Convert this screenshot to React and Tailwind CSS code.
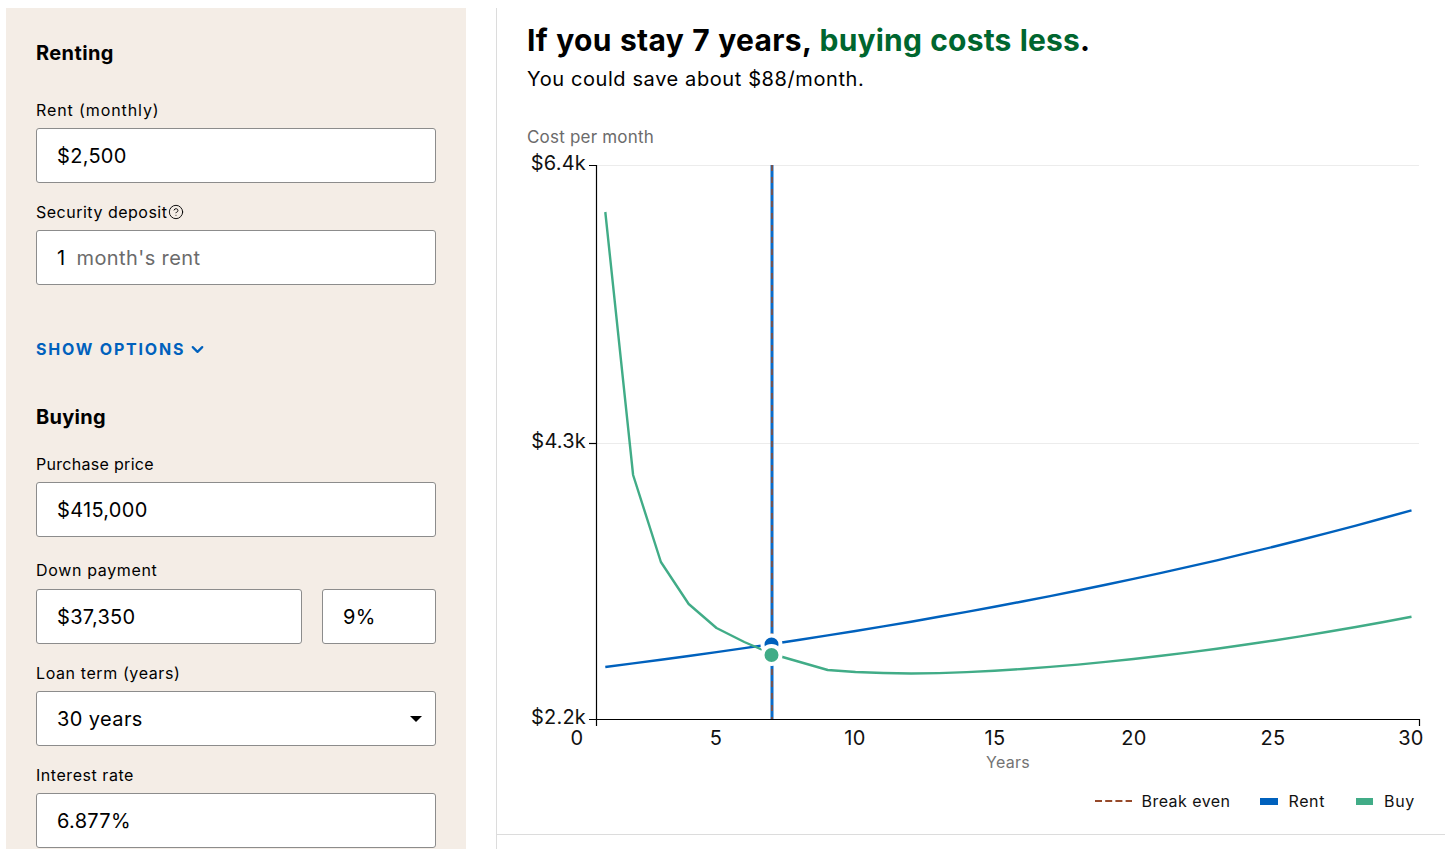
import { ChevronDown, CircleHelp } from 'lucide-react';

const BLUE = '#0061bd';
const GREEN = '#41ac87';
const BROWN = '#96492a';

const xAt = (t) => 577.5 + 27.8 * t;
const years = Array.from({ length: 30 }, (_, i) => i + 1);

// rent grows about 2.8% a year
const rentY = (t) => 667 - 124.2 * (Math.pow(1.028, t) - 1.028);
const rentLine = years.map((t) => `${xAt(t)},${rentY(t).toFixed(1)}`).join(' ');

const buyStart = [212, 475, 562, 604, 628, 642, 654, 662, 670, 672, 673, 673.5];
const buyY = (t) => (t <= 12 ? buyStart[t - 1] : 673.5 - 0.441 * Math.pow(t - 12, 1.68));
const buyLine = years.map((t) => `${xAt(t)},${buyY(t).toFixed(1)}`).join(' ');

const yTicks = [
  { y: 165, label: '$6.4k' },
  { y: 443, label: '$4.3k' },
  { y: 719, label: '$2.2k' },
];
const xTicks = [
  { x: 577, label: '0' },
  { x: 716, label: '5' },
  { x: 855, label: '10' },
  { x: 995, label: '15' },
  { x: 1134, label: '20' },
  { x: 1273, label: '25' },
  { x: 1411, label: '30' },
];

function TextInput({ value, className = 'w-[400px]' }) {
  return (
    <input
      readOnly
      value={value}
      className={`${className} block h-[55px] rounded-[3px] border border-[#8c8c8c] bg-white pl-5 text-[20px] tracking-[0.3px] text-black outline-none`}
    />
  );
}

function Chart() {
  return (
    <svg width="918" height="630" viewBox="527 150 918 630" className="block" style={{ fontFamily: 'Inter, sans-serif' }}>
      <line x1="596" y1="165.5" x2="1419" y2="165.5" stroke="#ececec" />
      <line x1="596" y1="443.5" x2="1419" y2="443.5" stroke="#ececec" />

      <line x1="772" y1="165" x2="772" y2="719" stroke="#0a6cc9" strokeWidth="3" />
      <line x1="772" y1="165" x2="772" y2="719" stroke={BROWN} strokeWidth="1.5" strokeDasharray="6 6" />

      <polyline points={rentLine} fill="none" stroke={BLUE} strokeWidth="2.4" strokeLinejoin="round" />
      <polyline points={buyLine} fill="none" stroke={GREEN} strokeWidth="2.4" strokeLinejoin="round" />

      <circle cx="771.5" cy="644.5" r="9" fill={BLUE} stroke="#fff" strokeWidth="4" />
      <circle cx="771.5" cy="655" r="9" fill={GREEN} stroke="#fff" strokeWidth="4" />

      <path d="M589 165.5H596.5V726M589 719.5H1419.5V726" fill="none" stroke="#000" strokeWidth="1.2" />
      <line x1="589" y1="443.5" x2="596" y2="443.5" stroke="#000" strokeWidth="1.2" />

      {yTicks.map((t) => (
        <text key={t.y} x="586" y={t.y + 5} textAnchor="end" fontSize="20" letterSpacing="0.2" fill="#111">{t.label}</text>
      ))}
      {xTicks.map((t) => (
        <text key={t.x} x={t.x} y="745" textAnchor="middle" fontSize="20" letterSpacing="0.3" fill="#111">{t.label}</text>
      ))}
      <text x="1008" y="768" textAnchor="middle" fontSize="16" letterSpacing="0.3" fill="#737373">Years</text>
    </svg>
  );
}

export default function App() {
  return (
    <div className="flex h-[849px] w-[1445px] overflow-hidden bg-white pl-[6px] pt-2 text-black" style={{ fontFamily: 'Inter, sans-serif' }}>
      <aside className="h-[841px] w-[460px] shrink-0 bg-[#f4ede6] pl-[30px] pt-[33px]">
        <h2 className="text-[20px] leading-6 font-bold tracking-[0.4px]">Renting</h2>

        <label className="mb-2 mt-[35px] block text-[16px] leading-5 tracking-[0.9px]">Rent (monthly)</label>
        <TextInput value="$2,500" />

        <label className="mb-2 mt-[19px] flex items-center text-[16px] leading-5 tracking-[0.5px]">
          Security deposit
          <CircleHelp size={16} strokeWidth={1.4} className="ml-px" />
        </label>
        <div className="flex h-[55px] w-[400px] items-center rounded-[3px] border border-[#8c8c8c] bg-white pl-5 text-[20px] tracking-[0.4px]">
          <span>1</span>
          <span className="ml-[11px] text-[#6b6b6b]">month's rent</span>
        </div>

        <button className="mt-[54px] flex h-5 items-center gap-[3px] text-[16px] leading-5 font-bold tracking-[1.8px] text-[#0061bd]">
          SHOW OPTIONS
          <ChevronDown size={19} strokeWidth={2.8} />
        </button>

        <h2 className="mt-[46px] text-[20px] leading-6 font-bold tracking-[0.3px]">Buying</h2>

        <label className="mb-2 mt-[25px] block text-[16px] leading-5 tracking-[0.3px]">Purchase price</label>
        <TextInput value="$415,000" />

        <label className="mb-[9px] mt-[23px] block text-[16px] leading-5 tracking-[0.65px]">Down payment</label>
        <div className="flex gap-5">
          <TextInput value="$37,350" className="w-[266px]" />
          <TextInput value="9%" className="w-[114px]" />
        </div>

        <label className="mb-2 mt-[19px] block text-[16px] leading-5 tracking-[0.6px]">Loan term (years)</label>
        <div className="relative w-[400px]">
          <select className="block h-[55px] w-full appearance-none rounded-[3px] border border-[#8c8c8c] bg-white pl-5 text-[20px] tracking-[0.4px] outline-none">
            <option>30 years</option>
          </select>
          <div className="absolute right-[14px] top-[25px] h-0 w-0 border-x-[6px] border-t-[6px] border-x-transparent border-t-black" />
        </div>

        <label className="mb-2 mt-[19px] block text-[16px] leading-5 tracking-[0.55px]">Interest rate</label>
        <TextInput value="6.877%" />
      </aside>

      <main className="ml-[30px] h-[841px] flex-1 border-l border-[#dcdcdc]">
        <div className="border-b border-[#dcdcdc] pb-[23px] pt-[12px]">
          <div className="pl-[30px]">
            <h1 className="text-[30px] leading-10 font-bold tracking-[0.32px] [word-spacing:0.75px]">
              If you stay 7 years, <span className="tracking-[0.2px] text-[#00662f]">buying costs less</span>.
            </h1>
            <p className="mt-[5px] text-[20px] leading-7 tracking-[0.6px]">You could save about $88/month.</p>
            <p className="mt-[32px] text-[17px] leading-6 tracking-[0.2px] text-[#6b6b6b]">Cost per month</p>
          </div>
          <div className="ml-[30px] mt-px">
            <Chart />
          </div>
          <div className="mr-[30px] mt-[11px] flex items-center justify-end text-[16px] leading-5 tracking-[0.45px] text-[#111]">
            <div className="flex items-center gap-[10px]">
              <svg width="37" height="2" className="block">
                <line x1="0" y1="1" x2="37" y2="1" stroke={BROWN} strokeWidth="2" strokeDasharray="7 3.2" />
              </svg>
              Break even
            </div>
            <div className="ml-[30px] flex items-center gap-[10px] tracking-[0.6px]">
              <span className="h-[7px] w-[18px] bg-[#0061bd]" />
              Rent
            </div>
            <div className="ml-[31px] flex items-center gap-[11px] tracking-[0.7px]">
              <span className="h-[7px] w-[17px] bg-[#41ac87]" />
              Buy
            </div>
          </div>
        </div>
      </main>
    </div>
  );
}
